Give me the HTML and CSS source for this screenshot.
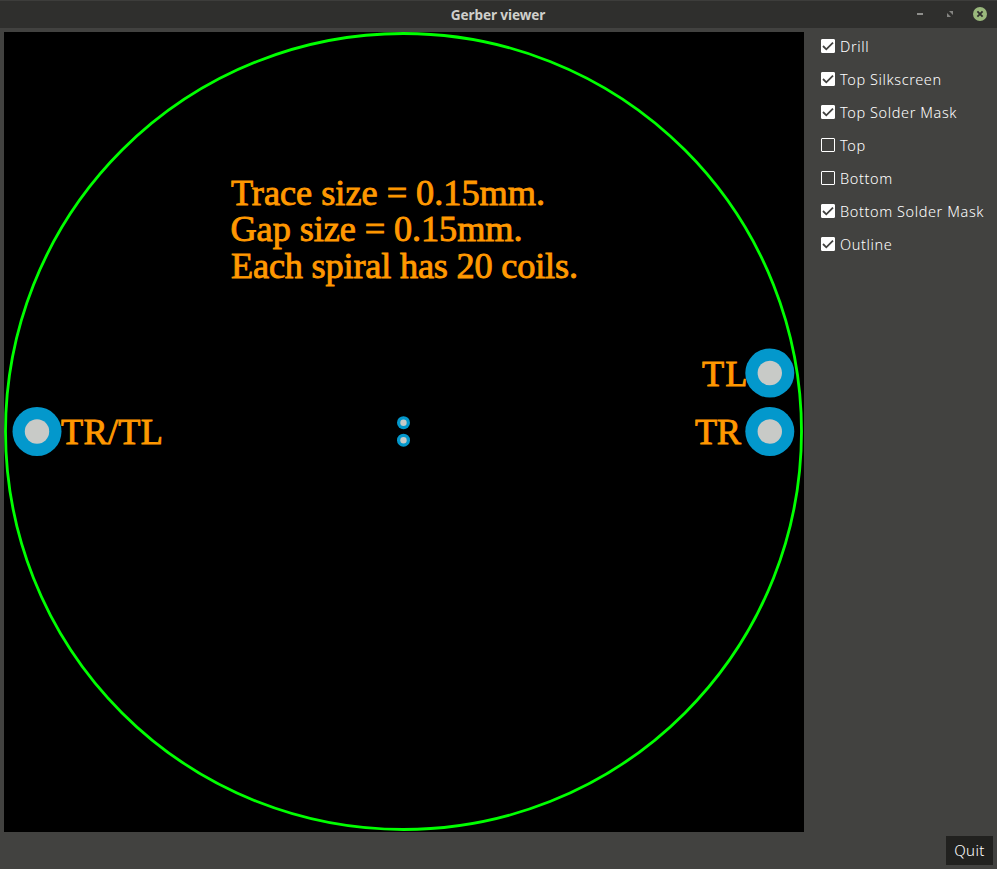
FILE: index.html
```html
<!DOCTYPE html>
<html lang="en">
<head>
<meta charset="utf-8">
<title>Gerber viewer</title>
<link rel="stylesheet" href="styles.css">
</head>
<body>
<div class="window">
  <header class="titlebar">
    <h1 class="title">Gerber viewer</h1>
    <div class="controls">
      <svg width="14" height="14" viewBox="0 0 14 14"><path d="M4 6h6v2H4z" fill="#8f8f8c"/></svg>
      <svg width="14" height="14" viewBox="0 0 14 14"><path d="M6 4h4v4zM4 6v4h4z" fill="#858582"/></svg>
      <svg width="14" height="14" viewBox="0 0 14 14"><circle cx="7" cy="7" r="7" fill="#9ab87c"/><path d="M4.4 4.4l5.2 5.2M9.6 4.4l-5.2 5.2" stroke="#2f2f2d" stroke-width="1.8"/></svg>
    </div>
  </header>
  <main class="content">
    <svg class="board" width="800" height="800" viewBox="4 32 800 800">
      <circle class="outline" cx="403.5" cy="431.5" r="398"/>
      <g class="silk">
        <text x="231" y="204.8" textLength="314">Trace size = 0.15mm.</text>
        <text x="230.5" y="241.4" textLength="292">Gap size = 0.15mm.</text>
        <text x="231" y="277.7" textLength="347">Each spiral has 20 coils.</text>
        <text x="702" y="385.5" textLength="45.5">TL</text>
        <text x="695" y="443.7" textLength="46">TR</text>
        <text x="61" y="443.7" textLength="102">TR/TL</text>
      </g>
      <g class="mask">
        <circle cx="37" cy="431.5" r="24.5"/>
        <circle cx="769.8" cy="373" r="24.5"/>
        <circle cx="769.8" cy="431.5" r="24.5"/>
        <circle cx="403.5" cy="422.7" r="6.5"/>
        <circle cx="403.5" cy="440.2" r="6.5"/>
      </g>
      <g class="drill">
        <circle cx="37" cy="431.5" r="12.2"/>
        <circle cx="769.8" cy="373" r="12.2"/>
        <circle cx="769.8" cy="431.5" r="12.2"/>
        <circle cx="403.5" cy="422.7" r="3.2"/>
        <circle cx="403.5" cy="440.2" r="3.2"/>
      </g>
    </svg>
    <aside class="layers">
      <label class="layer"><input type="checkbox" checked><span class="box"><svg viewBox="0 0 14 14"><path d="M2 7l3.3 3.3L12 3.6"/></svg></span><span>Drill</span></label>
      <label class="layer"><input type="checkbox" checked><span class="box"><svg viewBox="0 0 14 14"><path d="M2 7l3.3 3.3L12 3.6"/></svg></span><span>Top Silkscreen</span></label>
      <label class="layer"><input type="checkbox" checked><span class="box"><svg viewBox="0 0 14 14"><path d="M2 7l3.3 3.3L12 3.6"/></svg></span><span>Top Solder Mask</span></label>
      <label class="layer"><input type="checkbox"><span class="box"></span><span>Top</span></label>
      <label class="layer"><input type="checkbox"><span class="box"></span><span>Bottom</span></label>
      <label class="layer"><input type="checkbox" checked><span class="box"><svg viewBox="0 0 14 14"><path d="M2 7l3.3 3.3L12 3.6"/></svg></span><span>Bottom Solder Mask</span></label>
      <label class="layer"><input type="checkbox" checked><span class="box"><svg viewBox="0 0 14 14"><path d="M2 7l3.3 3.3L12 3.6"/></svg></span><span>Outline</span></label>
    </aside>
  </main>
  <footer class="footer"><button class="quit">Quit</button></footer>
</div>
</body>
</html>
```

FILE: styles.css
```css
* { box-sizing: border-box; }
body { margin: 0; background: #424240; font-family: "Noto Sans", sans-serif; }
.window { width: 997px; height: 869px; display: flex; flex-direction: column; overflow: hidden; }
.titlebar {
  height: 28px; flex: none; display: grid; grid-template-columns: 1fr auto 1fr; align-items: center;
  background: #2f2f2d; border-top: 1px solid #3d3d3b; padding: 0 10px 0 9px;
}
.title { grid-column: 2; margin: 0; font-size: 13.6px; line-height: 20px; font-weight: 700; color: #cfcfcb; letter-spacing: -0.1px; padding-top: 1px; }
.controls { grid-column: 3; justify-self: end; display: flex; gap: 16px; padding-bottom: 2px; }
.controls svg { display: block; }
.content { display: flex; padding: 4px 4px 0; height: 804px; flex: none; }
.board { display: block; flex: none; background: #000; }
.outline { fill: none; stroke: #00ff00; stroke-width: 2.8; }
.silk { font-family: "Liberation Serif", serif; font-size: 36.3px; fill: #ff9800; stroke: #ff9800; stroke-width: 0.9; }
.mask { fill: #0398cc; }
.drill { fill: #c8cac7; }
.layers { display: flex; flex-direction: column; gap: 4px; padding-left: 17px; }
.layer { height: 28px; margin-bottom: 1px; display: flex; align-items: center; gap: 5px; color: #fff; font-weight: 300; font-size: 14.5px; letter-spacing: 0.6px; white-space: nowrap; }
.layer input { display: none; }
.box { width: 14px; height: 14px; border: 1px solid #fff; border-radius: 1px; flex: none; }
.box svg { display: block; width: 14px; height: 14px; margin: -1px; fill: none; stroke: #424240; stroke-width: 1.8; }
input:checked + .box { background: #fff; }
.footer { display: flex; justify-content: flex-end; padding: 4px 4px 0; }
.quit { width: 47px; height: 29px; border: 0; padding: 0 0 2px; background: #21211f; color: #fff; font: 300 15px "Noto Sans", sans-serif; letter-spacing: 0.4px; }
```
